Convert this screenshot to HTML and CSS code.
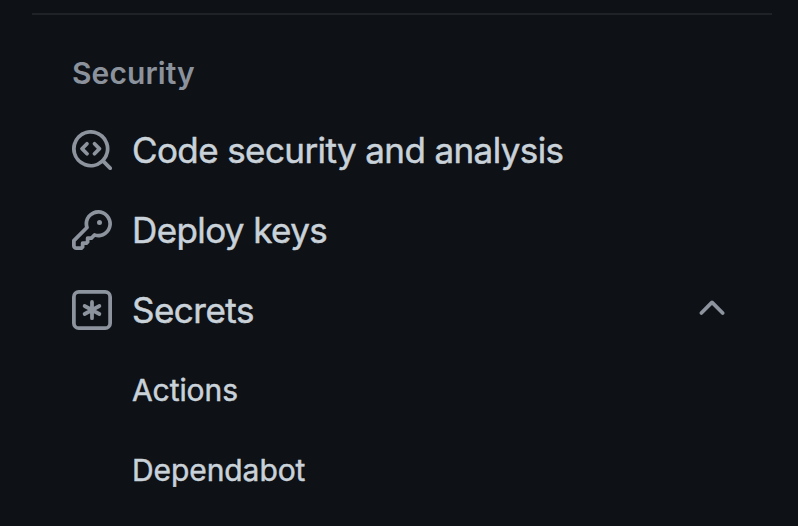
FILE: index.html
```html
<!DOCTYPE html>
<html lang="en">
<head>
<meta charset="utf-8">
<title>Settings</title>
<link rel="stylesheet" href="styles.css">
</head>
<body>
<nav class="sidebar">
  <h2 class="heading">Security</h2>
  <ul class="list">
    <li class="item">
      <svg class="icon" viewBox="0 0 16 16"><path d="M8.47 4.97a.75.75 0 0 0 0 1.06L9.94 7.5 8.47 8.97a.75.75 0 1 0 1.06 1.06l2-2a.75.75 0 0 0 0-1.06l-2-2a.75.75 0 0 0-1.06 0ZM6.53 6.03a.75.75 0 0 0-1.06-1.06l-2 2a.75.75 0 0 0 0 1.06l2 2a.75.75 0 1 0 1.06-1.06L5.06 7.5l1.47-1.47Z"/><path d="M12.246 13.307a7.501 7.501 0 1 1 1.06-1.06l2.474 2.473a.749.749 0 0 1-.326 1.275.749.749 0 0 1-.734-.215ZM1.5 7.5a6.002 6.002 0 0 0 3.608 5.504 6.002 6.002 0 0 0 6.486-1.117.748.748 0 0 1 .292-.293A6 6 0 1 0 1.5 7.5Z"/></svg>
      <span class="label">Code security and analysis</span>
    </li>
    <li class="item">
      <svg class="icon" viewBox="0 0 16 16"><path d="M10.5 0a5.499 5.499 0 1 1-1.288 10.848l-.932.932a.749.749 0 0 1-.53.22H7v.75a.749.749 0 0 1-.22.53l-.5.5a.749.749 0 0 1-.53.22H5v.75a.749.749 0 0 1-.22.53l-.5.5a.749.749 0 0 1-.53.22h-2A1.75 1.75 0 0 1 0 14.25v-2c0-.199.079-.389.22-.53l4.932-4.932A5.5 5.5 0 0 1 10.5 0Zm-4 5.5c-.001.431.069.86.205 1.269a.75.75 0 0 1-.181.768L1.5 12.56v1.69c0 .138.112.25.25.25h1.69l.06-.06v-1.19a.75.75 0 0 1 .75-.75h1.19l.06-.06v-1.19a.75.75 0 0 1 .75-.75h1.19l1.023-1.025a.75.75 0 0 1 .768-.18A4 4 0 1 0 6.5 5.5ZM11 6a1 1 0 1 1 0-2 1 1 0 0 1 0 2Z"/></svg>
      <span class="label">Deploy keys</span>
    </li>
    <li class="item">
      <svg class="icon outline" viewBox="0 0 16 16"><rect x=".75" y=".75" width="14.5" height="14.5" rx="2"/><path d="M8 4.75v6.5M5.05 6.4l5.9 3.2M5.05 9.6l5.9-3.2"/></svg>
      <span class="label label-short">Secrets</span>
      <svg class="icon chevron" viewBox="0 0 16 16"><path d="M3.22 10.53a.749.749 0 0 1 0-1.06l4.25-4.25a.749.749 0 0 1 1.06 0l4.25 4.25a.749.749 0 0 1-.326 1.275.749.749 0 0 1-.734-.215L8 6.811 4.28 10.53a.749.749 0 0 1-1.06 0Z"/></svg>
    </li>
    <li class="item sub">Actions</li>
    <li class="item sub">Dependabot</li>
  </ul>
</nav>
</body>
</html>
```
FILE: styles.css
```css
body {
  margin: 0;
  height: 526px;
  overflow: hidden;
  background: #0e1116;
  color: #c9d1d9;
  font-family: Inter, "Liberation Sans", sans-serif;
}

.sidebar {
  margin: 13px 26px 0 32px;
  padding: 40px 40px 0;
  border-top: 2px solid #1f2328;
}

.heading {
  margin: 0;
  font-size: 30px;
  line-height: 36px;
  font-weight: 600;
  letter-spacing: 0.1px;
  color: #8b929c;
}

.list {
  margin: 19px 0 0;
  padding: 0;
  list-style: none;
}

.item {
  display: flex;
  align-items: center;
  height: 80px;
  gap: 20px;
  font-size: 35px;
  -webkit-text-stroke: 0.5px currentColor;
  white-space: nowrap;
}

.label {
  letter-spacing: -0.6px;
}

.label-short {
  letter-spacing: -0.5px;
}

.icon {
  width: 40px;
  height: 40px;
  flex: none;
  fill: #8d949e;
}

.outline {
  fill: none;
  stroke: #8d949e;
  stroke-width: 1.5;
  stroke-linecap: round;
}

.chevron {
  margin: 0 0 4px auto;
}

.sub {
  padding-left: 60px;
  font-size: 30px;
  letter-spacing: -0.08px;
}
```
